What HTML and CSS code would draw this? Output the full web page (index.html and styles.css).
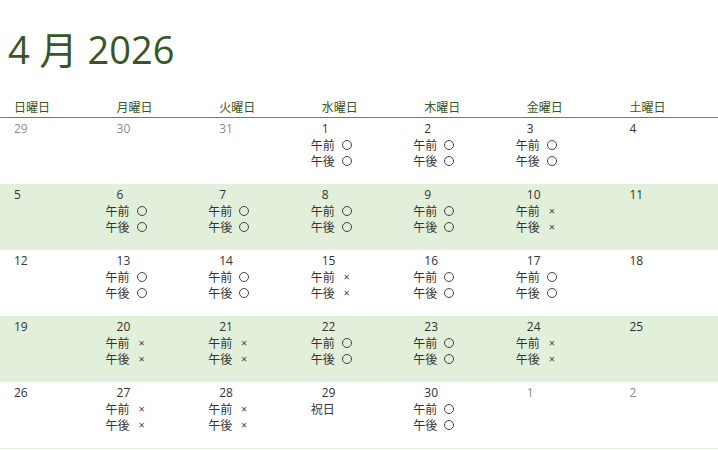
FILE: index.html
```html
<!DOCTYPE html>
<html lang="ja">
<head>
<meta charset="utf-8">
<title>4 月 2026</title>
<link rel="stylesheet" href="styles.css">
</head>
<body>
<h1 class="title">4 月 2026</h1>
<div class="cal">
  <div class="head">
    <div class="hd">日曜日</div><div class="hd">月曜日</div><div class="hd">火曜日</div><div class="hd">水曜日</div><div class="hd">木曜日</div><div class="hd">金曜日</div><div class="hd">土曜日</div>
  </div>
  <div class="week">
    <div class="cell"><div class="num other">29</div></div>
    <div class="cell"><div class="num other">30</div></div>
    <div class="cell"><div class="num other">31</div></div>
    <div class="cell"><div class="num">1</div><div class="slot">午前<span class="mk ok"></span></div><div class="slot">午後<span class="mk ok"></span></div></div>
    <div class="cell"><div class="num">2</div><div class="slot">午前<span class="mk ok"></span></div><div class="slot">午後<span class="mk ok"></span></div></div>
    <div class="cell"><div class="num">3</div><div class="slot">午前<span class="mk ok"></span></div><div class="slot">午後<span class="mk ok"></span></div></div>
    <div class="cell"><div class="num">4</div></div>
  </div>
  <div class="week band">
    <div class="cell"><div class="num">5</div></div>
    <div class="cell"><div class="num">6</div><div class="slot">午前<span class="mk ok"></span></div><div class="slot">午後<span class="mk ok"></span></div></div>
    <div class="cell"><div class="num">7</div><div class="slot">午前<span class="mk ok"></span></div><div class="slot">午後<span class="mk ok"></span></div></div>
    <div class="cell"><div class="num">8</div><div class="slot">午前<span class="mk ok"></span></div><div class="slot">午後<span class="mk ok"></span></div></div>
    <div class="cell"><div class="num">9</div><div class="slot">午前<span class="mk ok"></span></div><div class="slot">午後<span class="mk ok"></span></div></div>
    <div class="cell"><div class="num">10</div><div class="slot">午前<span class="mk ng">×</span></div><div class="slot">午後<span class="mk ng">×</span></div></div>
    <div class="cell"><div class="num">11</div></div>
  </div>
  <div class="week">
    <div class="cell"><div class="num">12</div></div>
    <div class="cell"><div class="num">13</div><div class="slot">午前<span class="mk ok"></span></div><div class="slot">午後<span class="mk ok"></span></div></div>
    <div class="cell"><div class="num">14</div><div class="slot">午前<span class="mk ok"></span></div><div class="slot">午後<span class="mk ok"></span></div></div>
    <div class="cell"><div class="num">15</div><div class="slot">午前<span class="mk ng">×</span></div><div class="slot">午後<span class="mk ng">×</span></div></div>
    <div class="cell"><div class="num">16</div><div class="slot">午前<span class="mk ok"></span></div><div class="slot">午後<span class="mk ok"></span></div></div>
    <div class="cell"><div class="num">17</div><div class="slot">午前<span class="mk ok"></span></div><div class="slot">午後<span class="mk ok"></span></div></div>
    <div class="cell"><div class="num">18</div></div>
  </div>
  <div class="week band">
    <div class="cell"><div class="num">19</div></div>
    <div class="cell"><div class="num">20</div><div class="slot">午前<span class="mk ng">×</span></div><div class="slot">午後<span class="mk ng">×</span></div></div>
    <div class="cell"><div class="num">21</div><div class="slot">午前<span class="mk ng">×</span></div><div class="slot">午後<span class="mk ng">×</span></div></div>
    <div class="cell"><div class="num">22</div><div class="slot">午前<span class="mk ok"></span></div><div class="slot">午後<span class="mk ok"></span></div></div>
    <div class="cell"><div class="num">23</div><div class="slot">午前<span class="mk ok"></span></div><div class="slot">午後<span class="mk ok"></span></div></div>
    <div class="cell"><div class="num">24</div><div class="slot">午前<span class="mk ng">×</span></div><div class="slot">午後<span class="mk ng">×</span></div></div>
    <div class="cell"><div class="num">25</div></div>
  </div>
  <div class="week last">
    <div class="cell"><div class="num">26</div></div>
    <div class="cell"><div class="num">27</div><div class="slot">午前<span class="mk ng">×</span></div><div class="slot">午後<span class="mk ng">×</span></div></div>
    <div class="cell"><div class="num">28</div><div class="slot">午前<span class="mk ng">×</span></div><div class="slot">午後<span class="mk ng">×</span></div></div>
    <div class="cell"><div class="num">29</div><div class="slot">祝日</div></div>
    <div class="cell"><div class="num">30</div><div class="slot">午前<span class="mk ok"></span></div><div class="slot">午後<span class="mk ok"></span></div></div>
    <div class="cell"><div class="num other">1</div></div>
    <div class="cell"><div class="num other">2</div></div>
  </div>
</div>
</body>
</html>
```
FILE: styles.css
```css
html, body {
  margin: 0;
  padding: 0;
  background: #ffffff;
}
body {
  font-family: "Open Sans", "Noto Sans CJK JP", sans-serif;
  color: #333333;
  width: 718px;
  height: 450px;
  overflow: hidden;
}
.title {
  margin: 27px 0 28px 8px;
  font-size: 38px;
  line-height: 44px;
  font-weight: 400;
  color: #375623;
}
.cal {
  width: 718px;
}
.head {
  display: grid;
  grid-template-columns: repeat(7, 1fr);
  border-bottom: 1px solid #5f8f35;
  height: 18px;
}
.hd {
  font-family: "Noto Sans CJK JP", sans-serif;
  font-size: 12px;
  line-height: 16px;
  padding: 0 0 0 14px;
  color: #375623;
}
.week {
  display: grid;
  grid-template-columns: repeat(7, 1fr);
  height: 66px;
}
.week.band {
  background: #e2efda;
}
.week.last {
  border-bottom: 1px solid #e2efda;
}
.cell {
  padding: 3px 0 0 0;
  font-size: 12px;
  line-height: 16px;
}
.num {
  padding-left: 14px;
  color: #333333;
}
.num.other {
  color: #8c8c8c;
}
.slot {
  padding-left: 3px;
  font-family: "Noto Sans CJK JP", sans-serif;
  color: #333333;
  display: flex;
  align-items: center;
}
.mk {
  display: inline-flex;
  justify-content: center;
  align-items: center;
  width: 14px;
  height: 16px;
  margin-left: 5px;
}
.mk.ok::before {
  content: "";
  width: 8px;
  height: 8px;
  border: 1px solid #444444;
  border-radius: 50%;
}
.mk.ng {
  font-family: "Open Sans", sans-serif;
  font-size: 11px;
  color: #444444;
}
```
